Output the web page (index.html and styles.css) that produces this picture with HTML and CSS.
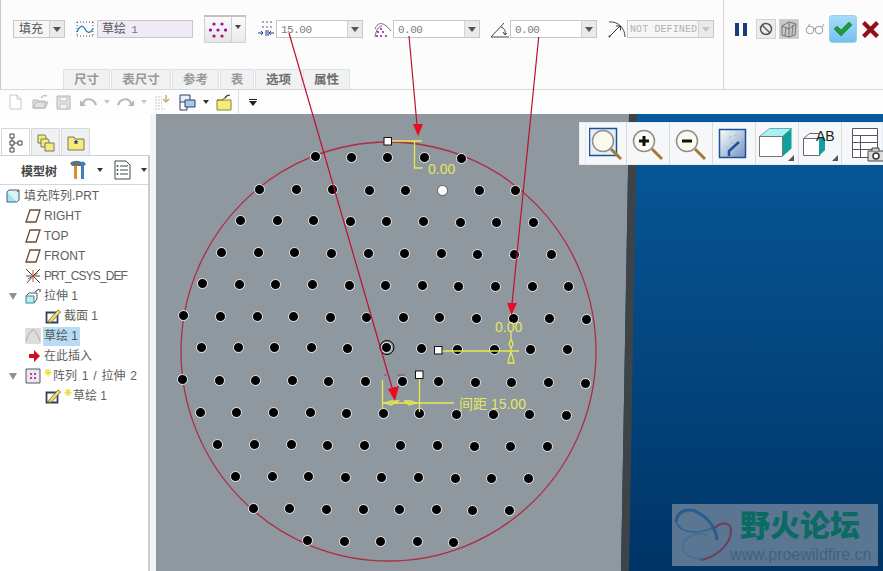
FILE: index.html
```html
<!DOCTYPE html>
<html lang="zh">
<head>
<meta charset="utf-8">
<title>填充阵列</title>
<link rel="stylesheet" href="styles.css">
</head>
<body>
<div class="app">
  <header class="ribbon">
    <div class="ribbon-main">
      <div class="controls">
        <div class="combo combo-type"><span class="combo-text cjk">填充</span><span class="combo-arrow"></span></div>
        <div class="group group-sketch">
          <svg class="ctl-icon" viewBox="0 0 18 18"><path d="M1 2h16M1 16h16M1 2v14M17 2v14" stroke="#445" stroke-width="1" stroke-dasharray="1 2" fill="none"/><path d="M1 12C4 5 7 5 9 9s5 5 8 0" stroke="#2a78b0" stroke-width="1.3" fill="none"/></svg>
          <div class="field field-sketch">草绘 <span class="field-num">1</span></div>
        </div>
        <div class="pattern-btn">
          <span class="pattern-face"><svg viewBox="0 0 18 18" width="18" height="18"><g fill="#a01090"><circle cx="5" cy="3" r="1.6"/><circle cx="13" cy="3" r="1.6"/><circle cx="1.500" cy="9" r="1.6"/><circle cx="9" cy="9" r="1.6"/><circle cx="16.500" cy="9" r="1.6"/><circle cx="5" cy="15" r="1.6"/><circle cx="13" cy="15" r="1.6"/></g></svg></span>
          <span class="pattern-arrow"></span>
        </div>
        <div class="group">
          <svg class="ctl-icon" viewBox="0 0 18 18"><g fill="#445"><circle cx="6" cy="2" r=".8"/><circle cx="10" cy="2" r=".8"/><circle cx="14" cy="2" r=".8"/><circle cx="6" cy="7" r=".8"/><circle cx="10" cy="7" r=".8"/><circle cx="14" cy="7" r=".8"/></g><path d="M1 13h5M4 11l2 2-2 2M9 10v6M11 10v6M17 13h-5M14 11l-2 2 2 2" stroke="#1a3f8f" fill="none"/></svg>
          <div class="number"><span class="number-val">15.00</span><span class="combo-arrow"></span></div>
        </div>
        <div class="group">
          <svg class="ctl-icon" viewBox="0 0 18 18"><path d="M1 9C4 1 10 2 17 11M1 17C2 10 5 6 8 6" stroke="#666" fill="none"/><g fill="#a01090"><circle cx="7" cy="9" r="1"/><circle cx="4" cy="12" r="1"/><circle cx="9" cy="12" r="1"/><circle cx="3" cy="16" r="1"/><circle cx="7" cy="16" r="1"/><circle cx="12" cy="16" r="1"/></g></svg>
          <div class="number"><span class="number-val">0.00</span><span class="combo-arrow"></span></div>
        </div>
        <div class="group">
          <svg class="ctl-icon" viewBox="0 0 18 18"><path d="M0 17L13 3M0 17h18" stroke="#444" fill="none"/><path d="M10 7c3 1 5 4 4 7M12 12l2 3 2-2" stroke="#444" fill="none"/></svg>
          <div class="number"><span class="number-val">0.00</span><span class="combo-arrow"></span></div>
        </div>
        <div class="group">
          <svg class="ctl-icon" viewBox="0 0 18 18"><path d="M1 2c9-1 16 6 16 15" stroke="#444" fill="none"/><path d="M1 17L12 6M8 6h4.500v4.500" stroke="#333" fill="none"/><circle cx="1.500" cy="16.500" r="1" fill="#333"/></svg>
          <div class="number number-off"><span class="number-val">NOT DEFINED</span><span class="combo-arrow"></span></div>
        </div>
      </div>
      <nav class="tabs">
        <span class="tab tab-a">尺寸</span>
        <span class="tab tab-b">表尺寸</span>
        <span class="tab tab-a">参考</span>
        <span class="tab tab-c">表</span>
        <span class="tab tab-a tab-on">选项</span>
        <span class="tab tab-a tab-on">属性</span>
      </nav>
    </div>
    <div class="actions">
      <svg class="act-pause" viewBox="0 0 12 13"><path d="M0 0h4v13H0zM8 0h4v13H8z" fill="#1a3a80"/></svg>
      <span class="act-box act-stop"><svg viewBox="0 0 20 18" width="20" height="18"><circle cx="10" cy="9" r="5.500" fill="none" stroke="#555" stroke-width="1.500"/><path d="M6 5l8 8" stroke="#555" stroke-width="1.500"/></svg></span>
      <span class="act-box act-hatch"><svg viewBox="0 0 20 18" width="20" height="18"><path d="M3 6l7-4 7 2-1 11-6 2-7-2zM10 2l0 15M7 7l-1 9M14 5l-1 10M3 6l7 3 7-5" stroke="#777" fill="none"/></svg></span>
      <svg class="act-glasses" viewBox="0 0 20 12"><circle cx="5" cy="7" r="3.800" fill="none" stroke="#999"/><circle cx="14" cy="7" r="3.800" fill="none" stroke="#999"/><path d="M8.500 6l2-1M17 4l2-3M3 3l2-2" stroke="#999" fill="none"/></svg>
      <span class="act-ok"><svg viewBox="0 0 20 16" width="20" height="16"><path d="M1 8l3-3 4 4 8-8 3 3-11 11z" fill="#1e9a3a" stroke="#0c6a22" stroke-width=".5"/></svg></span>
      <svg class="act-cancel" viewBox="0 0 17 17"><path d="M0 3l3-3 5.500 5.500L14 0l3 3-5.500 5.500L17 14l-3 3-5.500-5.500L3 17l-3-3 5.500-5.500z" fill="#8f1018"/></svg>
    </div>
  </header>

  <div class="toolbar">
    <svg class="tb-i tb-new" viewBox="0 0 13 16"><path d="M1 1h7l4 4v10H1zM8 1v4h4" fill="#fff" stroke="#c4c8cc"/></svg>
    <svg class="tb-i tb-open" viewBox="0 0 17 16"><path d="M1 14V6h5l1 1h6v7zM1 14l3-6h12l-3 6z" fill="#dfe1e3" stroke="#b4b8bc"/><path d="M9 4c2-3 4-3 6-2" stroke="#c0c4c8" fill="none" stroke-width="1.500"/></svg>
    <svg class="tb-i tb-save" viewBox="0 0 15 15"><path d="M1 1h13v13H1z" fill="#dfe2e5" stroke="#b0b4b8"/><path d="M4 2h7v4H4zM4 9h7v5H4z" fill="#f2f3f4" stroke="#c0c4c8"/></svg>
    <svg class="tb-i tb-undo" viewBox="0 0 17 12"><path d="M3 8c1-6 10-7 13 1" fill="none" stroke="#b6b9bc" stroke-width="2.200"/><path d="M0 4l6 6H0z" fill="#b6b9bc"/></svg>
    <span class="tb-dd tb-dd-pale tb-dd1"></span>
    <svg class="tb-i tb-redo" viewBox="0 0 17 12"><path d="M14 8C13 2 4 1 1 9" fill="none" stroke="#b6b9bc" stroke-width="2.200"/><path d="M17 4l-6 6h6z" fill="#b6b9bc"/></svg>
    <span class="tb-dd tb-dd-pale tb-dd2"></span>
    <svg class="tb-i tb-regen" viewBox="0 0 16 17"><path d="M1 3h7M1 6h7M1 9h7M1 12h7M1 15h10" stroke="#c4c8cc" stroke-dasharray="2 1" fill="none"/><path d="M12 1v7M9 5l3 3 3-3" stroke="#c8b070" fill="none" stroke-width="1.500"/></svg>
    <svg class="tb-i tb-win" viewBox="0 0 17 17"><path d="M1 1h10v7H1z" fill="#e8f0f8" stroke="#2a3f6a"/><path d="M6 6h10v7H6z" fill="#a8c8ea" stroke="#2a3f6a"/><path d="M1 8v8h7v-3" fill="none" stroke="#2a3f6a"/></svg>
    <span class="tb-dd tb-dd3"></span>
    <svg class="tb-i tb-folder" viewBox="0 0 16 17"><path d="M1 6h14v10H1z" fill="#f6ec7a" stroke="#8a8030"/><path d="M1 6h6l1-2h2" fill="none" stroke="#8a8030"/><path d="M9 4c1-2 3-3 5-3" fill="none" stroke="#333" stroke-width="1.200"/></svg>
    <span class="tb-sep"></span>
    <span class="tb-more"></span>
  </div>

  <main class="workspace">
    <aside class="side">
      <div class="side-tabs">
        <span class="side-tab side-tab-on"><svg viewBox="0 0 14 20" width="14" height="20"><path d="M1 1h4v4H1zM1 8h4v4H1zM1 15h4v4H1zM9 8h4v4H9zM3 5v3M3 12v3M5 10h4" fill="none" stroke="#444"/></svg></span>
        <span class="side-tab"><svg viewBox="0 0 18 18" width="18" height="18"><path d="M1 1h7l1 2v6H1z" fill="#f6ec7a" stroke="#776"/><path d="M4 5h7l1 2v6H4z" fill="#f6ec7a" stroke="#776"/><path d="M8 9h9v8H8z" fill="#f6ec7a" stroke="#776"/></svg></span>
        <span class="side-tab"><svg viewBox="0 0 18 16" width="18" height="16"><path d="M1 2h6l1 2h9v11H1z" fill="#f6ec7a" stroke="#776"/><text x="9" y="13" class="star-mark">*</text></svg></span>
      </div>
      <div class="side-panel">
        <div class="tree-head">
          <span class="tree-title">模型树</span>
          <svg class="head-tools" viewBox="0 0 18 20"><path d="M1 3c4-3 9-3 13 0l-2 3H3z" fill="#5f6f7f"/><path d="M5 6h3v13H5z" fill="#d8902c"/><path d="M12 4l2-3 3 3-2 2v13h-3z" fill="#3f7fc0"/></svg>
          <span class="tb-dd head-dd1"></span>
          <svg class="head-list" viewBox="0 0 17 20"><path d="M1 1h11l4 4v14H1z" fill="#fff" stroke="#444"/><path d="M6 6h8M6 10h8M6 14h8" stroke="#444"/><circle cx="3.500" cy="6" r="1" fill="#264"/><circle cx="3.500" cy="10" r="1" fill="#264"/><circle cx="3.500" cy="14" r="1" fill="#264"/></svg>
          <span class="tb-dd head-dd2"></span>
        </div>
        <ul class="tree">
          <li class="row lv0"><svg class="node" viewBox="0 0 14 14"><path d="M1 3h10v10H1z" fill="#9ee6ee" stroke="#557"/><path d="M1 3l2-2h10v10l-2 2M11 3l2-2" fill="#d4f4f8" stroke="#557"/></svg>填充阵列.PRT</li>
          <li class="row lv1"><svg class="node" viewBox="0 0 16 14"><path d="M1 13L5 1h10l-4 12z" fill="none" stroke="#6a4a30" stroke-width="1.300"/></svg>RIGHT</li>
          <li class="row lv1"><svg class="node" viewBox="0 0 16 14"><path d="M1 13L5 1h10l-4 12z" fill="none" stroke="#6a4a30" stroke-width="1.300"/></svg>TOP</li>
          <li class="row lv1"><svg class="node" viewBox="0 0 16 14"><path d="M1 13L5 1h10l-4 12z" fill="none" stroke="#6a4a30" stroke-width="1.300"/></svg>FRONT</li>
          <li class="row lv1"><svg class="node" viewBox="0 0 16 16"><path d="M8 8L1 1M8 8l7-7M8 8L2 15M8 8l7 7M1 8h14" stroke="#444" fill="none"/><path d="M8 2v12M3 11l10-6" stroke="#b85030" fill="none"/></svg><span class="narrow">PRT_CSYS_DEF</span></li>
          <li class="row lv1 has-arrow"><span class="twist"></span><svg class="node" viewBox="0 0 16 16"><path d="M1 8l3-3h8v6l-3 4" fill="none" stroke="#556"/><path d="M1 8h8v7H1z" fill="#bfeef2" stroke="#2a8a90"/><path d="M10 4l4-3M15 1v3" stroke="#334" fill="none"/></svg>拉伸 1</li>
          <li class="row lv2"><svg class="node" viewBox="0 0 16 16"><path d="M1.500 4.500h11v10h-11z" fill="#fff" stroke="#2f4258" stroke-width="1.800"/><path d="M4 12l9-10 2.500 2-9 10-3 .5z" fill="#f4dc70" stroke="#5a4a20" stroke-width=".7"/></svg>截面 1</li>
          <li class="row lv1"><svg class="node node-sk" viewBox="0 0 16 16"><path d="M0 0h16v16H0z" fill="#dcdcdc"/><path d="M1 13C4 4 7 2 8 2s4 2 7 11" fill="none" stroke="#aaa"/></svg><span class="hl">草绘 1</span></li>
          <li class="row lv1"><svg class="node" viewBox="0 0 16 14"><path d="M4 5h5V1l6 6-6 6V9H4z" fill="#d01020"/></svg>在此插入</li>
          <li class="row lv1 has-arrow"><span class="twist"></span><svg class="node" viewBox="0 0 16 16"><path d="M1 1h14v14H1z" fill="#ece6f2" stroke="#556"/><g fill="#a01060"><circle cx="6" cy="6" r="1"/><circle cx="10" cy="6" r="1"/><circle cx="6" cy="10" r="1"/><circle cx="10" cy="10" r="1"/></g></svg><span class="spark">✳</span><span class="wide">阵列 1 / 拉伸 2</span></li>
          <li class="row lv2"><svg class="node" viewBox="0 0 16 16"><path d="M1.500 4.500h11v10h-11z" fill="#fff" stroke="#2f4258" stroke-width="1.800"/><path d="M4 12l9-10 2.500 2-9 10-3 .5z" fill="#f4dc70" stroke="#5a4a20" stroke-width=".7"/></svg><span class="spark">✳</span>草绘 1</li>
        </ul>
      </div>
    </aside>

    <section class="canvas">
      <svg class="scene" viewBox="156 114 727 457">
        <defs>
          <linearGradient id="deep" x1="0" y1="0" x2="0" y2="1"><stop offset="0" stop-color="#075a9c"/><stop offset="1" stop-color="#003466"/></linearGradient>
        </defs>
        <path class="sky" d="M629 114H883V571H621z"/>
        <path class="edge" d="M629 114h8l-8 457h-8z"/>
        <ellipse class="outline" cx="388.500" cy="351.500" rx="207.500" ry="209.500"/>
        <g class="dots">
          <circle cx="315" cy="156"/><circle cx="351" cy="157"/><circle cx="387" cy="157"/><circle cx="424" cy="157"/><circle cx="461" cy="158"/>
          <circle cx="259" cy="189"/><circle cx="296" cy="189"/><circle cx="332" cy="189"/><circle cx="369" cy="190"/><circle cx="405" cy="190"/><circle class="dot-white" cx="442" cy="190"/><circle cx="479" cy="190"/><circle cx="515" cy="190"/>
          <circle cx="240" cy="220"/><circle cx="277" cy="220"/><circle cx="313" cy="220"/><circle cx="350" cy="221"/><circle cx="386" cy="221"/><circle cx="423" cy="221"/><circle cx="460" cy="222"/><circle cx="496" cy="222"/><circle cx="533" cy="222"/>
          <circle cx="221" cy="252"/><circle cx="258" cy="252"/><circle cx="294" cy="252"/><circle cx="331" cy="253"/><circle cx="368" cy="253"/><circle cx="404" cy="253"/><circle cx="441" cy="253"/><circle cx="477" cy="254"/><circle cx="514" cy="254"/><circle cx="551" cy="254"/>
          <circle cx="202" cy="283"/><circle cx="239" cy="284"/><circle cx="275" cy="284"/><circle cx="312" cy="284"/><circle cx="349" cy="285"/><circle cx="385" cy="285"/><circle cx="422" cy="285"/><circle cx="458" cy="286"/><circle cx="495" cy="286"/><circle cx="532" cy="286"/><circle cx="568" cy="286"/>
          <circle cx="183" cy="315"/><circle cx="220" cy="316"/><circle cx="257" cy="316"/><circle cx="293" cy="316"/><circle cx="330" cy="317"/><circle cx="366" cy="317"/><circle cx="403" cy="317"/><circle cx="439" cy="317"/><circle cx="476" cy="318"/><circle cx="513" cy="318"/><circle cx="549" cy="318"/><circle cx="586" cy="319"/>
          <circle cx="201" cy="347"/><circle cx="238" cy="347"/><circle cx="274" cy="347"/><circle cx="311" cy="347"/><circle cx="347" cy="348"/><circle cx="386" cy="347"/><circle cx="421" cy="348"/><circle cx="457" cy="349"/><circle cx="494" cy="349"/><circle cx="530" cy="349"/><circle cx="567" cy="349"/>
          <circle cx="182" cy="379"/><circle cx="219" cy="380"/><circle cx="255" cy="380"/><circle cx="292" cy="380"/><circle cx="328" cy="381"/><circle cx="365" cy="381"/><circle cx="402" cy="381"/><circle cx="438" cy="381"/><circle cx="475" cy="382"/><circle cx="511" cy="382"/><circle cx="548" cy="382"/><circle cx="585" cy="383"/>
          <circle cx="200" cy="412"/><circle cx="236" cy="412"/><circle cx="273" cy="412"/><circle cx="310" cy="412"/><circle cx="346" cy="413"/><circle cx="383" cy="413"/><circle cx="419" cy="413"/><circle cx="456" cy="414"/><circle cx="493" cy="414"/><circle cx="529" cy="414"/><circle cx="566" cy="415"/>
          <circle cx="217" cy="444"/><circle cx="254" cy="444"/><circle cx="291" cy="444"/><circle cx="327" cy="445"/><circle cx="364" cy="445"/><circle cx="400" cy="445"/><circle cx="437" cy="445"/><circle cx="474" cy="446"/><circle cx="510" cy="446"/><circle cx="547" cy="446"/>
          <circle cx="235" cy="476"/><circle cx="272" cy="476"/><circle cx="308" cy="476"/><circle cx="345" cy="477"/><circle cx="381" cy="477"/><circle cx="418" cy="477"/><circle cx="455" cy="478"/><circle cx="491" cy="478"/><circle cx="528" cy="478"/>
          <circle cx="253" cy="508"/><circle cx="289" cy="508"/><circle cx="326" cy="509"/><circle cx="363" cy="509"/><circle cx="399" cy="509"/><circle cx="436" cy="509"/><circle cx="472" cy="510"/><circle cx="509" cy="510"/>
          <circle cx="307" cy="540"/><circle cx="344" cy="541"/><circle cx="380" cy="541"/><circle cx="417" cy="541"/><circle cx="453" cy="542"/>
        </g>
        <circle class="ring" cx="387" cy="347.500" r="7"/>
        <path class="tick" d="M384 375h3M397 375h8"/>
        <g class="dim">
          <path d="M388 141h34M414.500 141v27h8"/>
          <path d="M438 351h81M511 332v6"/>
          <path d="M511 339l2 5-2 5-2-5zM511 352l2 6 1 5h-6l1-5z"/>
          <path d="M382.500 380v29M419.500 379v33M382 403h72"/>
          <path d="M385 403l6-2h7l-7 4zM416 403l-5-2h-6l4 4z"/>
        </g>
        <rect class="handle" x="384" y="137.500" width="7.500" height="7.500"/>
        <rect class="handle" x="434.500" y="346.500" width="7.500" height="7.500"/>
        <rect class="handle" x="415.500" y="371" width="7.500" height="7.500"/>
        <text class="dim-text" x="428" y="174">0.00</text>
        <text class="dim-text" x="495" y="332">0.00</text>
        <text class="dim-text" x="459" y="409">间距 15.00</text>
      </svg>

      <div class="view-tools">
        <span class="view-btn view-first"><svg viewBox="590 125 34 36" width="34" height="36"><path d="M590.500 127.500h27v27h-27z" fill="#e8eef6" stroke="#1f4f98" stroke-width="1.500"/><circle cx="604" cy="140" r="10.500" fill="#fbf9ee" stroke="#8a8f90" stroke-width="1.500"/><path d="M612 148l10 10" stroke="#a87838" stroke-width="3"/></svg></span>
        <span class="view-btn"><svg viewBox="632 125 34 36" width="34" height="36"><circle cx="645" cy="140" r="10.500" fill="#fbf9ee" stroke="#8a8f90" stroke-width="1.500"/><path d="M640 140h10M645 135v10" stroke="#111" stroke-width="3"/><path d="M653 148l10 10" stroke="#a87838" stroke-width="3"/></svg></span>
        <span class="view-btn"><svg viewBox="675 125 34 36" width="34" height="36"><circle cx="688" cy="140" r="10.500" fill="#fbf9ee" stroke="#8a8f90" stroke-width="1.500"/><path d="M683 140h10" stroke="#111" stroke-width="3"/><path d="M696 148l10 10" stroke="#a87838" stroke-width="3"/></svg></span>
        <span class="view-btn"><svg viewBox="719 125 34 36" width="34" height="36"><defs><linearGradient id="fadeb" x1="0" y1="0" x2="1" y2="1"><stop offset="0" stop-color="#fff"/><stop offset="1" stop-color="#6f93bd"/></linearGradient></defs><path d="M721.500 128.500h26v28h-26z" fill="url(#fadeb)" stroke="#1f4f98" stroke-width="1.500"/><path d="M731 155v-5l10-9" stroke="#1f4f98" stroke-width="2.500" fill="none"/><path d="M733 143l2-2M737 135l2-2M731 137l2-2M728 147l1-1" stroke="#9cb4d0"/></svg></span>
        <span class="view-btn view-corner"><svg viewBox="761 125 38 37" width="38" height="37"><path d="M762.500 136.500l10-8h22l-9 8z" fill="#a8f0f4" stroke="#66aab0"/><path d="M785.500 136.500l9-8v20l-9 8z" fill="#10a09c"/><path d="M762.500 136.500h23v20h-23z" fill="#fff" stroke="#777"/><path d="M797 155v6h-6z" fill="#555"/></svg></span>
        <span class="view-btn view-corner"><svg viewBox="804 125 38 37" width="38" height="37"><path d="M806.500 138.500l6-5h10" fill="none" stroke="#667"/><path d="M806.500 138.500h16v17h-16z" fill="#fff" stroke="#667"/><path d="M822 138h6v12l-6 6z" fill="#10a09c"/><text x="819" y="141" class="ab">AB</text><path d="M841 155v6h-6z" fill="#555"/></svg></span>
        <span class="view-btn"><svg viewBox="848 125 35 36" width="35" height="36"><path d="M850.500 127.500h25v29h-25zM850.500 134.500h25M850.500 141.500h25M850.500 148.500h25M858.500 134.500v22" fill="#fff" stroke="#556"/><path d="M866 150h17v10h-17z" fill="#ddd" stroke="#444"/><path d="M870 150v-3h7v3" fill="#ccc" stroke="#444"/><circle cx="874" cy="155" r="3" fill="#fff" stroke="#333" stroke-width="1.500"/></svg></span>
      </div>

      <div class="watermark">
        <svg class="wm-logo" viewBox="672 504 70 62"><path d="M676 522C677 510 690 507 699 513 708 518 716 528 717 540" fill="none" stroke="#2b5c8c" stroke-width="3"/><path d="M676 522C680 532 695 536 715 527" fill="none" stroke="#2b5c8c" stroke-width="1.200"/><path d="M715 528C722 521 731 522 731 531 731 545 715 558 700 560" fill="none" stroke="#703f60" stroke-width="2.200"/><path d="M707 535C695 532 684 537 683 546 683 555 693 561 703 558" fill="none" stroke="#3f6f96" stroke-width="1.500"/></svg>
        <span class="wm-title">野火论坛</span>
        <span class="wm-url">www.proewildfire.cn</span>
      </div>
    </section>
  </main>

  <svg class="leaders" viewBox="0 0 883 571">
    <g class="leader">
      <path d="M289 33L393 391"/>
      <path d="M409 36L417 125"/>
      <path d="M538.700 37L512 304"/>
    </g>
    <g class="leader-head">
      <path d="M388 389l11-3-4 15z"/>
      <path d="M413 124h10l-5 12z"/>
      <path d="M507 303h10l-5.500 12z"/>
    </g>
  </svg>
</div>
</body>
</html>
```

FILE: styles.css
```css
* { box-sizing: border-box; }
html, body { margin: 0; padding: 0; }
body {
  width: 883px;
  height: 571px;
  overflow: hidden;
  background: #fff;
  font-family: "Liberation Sans", "Noto Sans CJK SC", sans-serif;
  font-size: 12px;
  color: #555;
}
svg { display: block; flex: none; }
.app { position: relative; display: flex; flex-direction: column; width: 883px; height: 571px; }
.leaders { position: absolute; left: 0; top: 0; width: 883px; height: 571px; pointer-events: none; }

/* ribbon */
.ribbon {
  display: flex;
  height: 90px;
  flex: none;
  background: #fcfcfc;
  border-bottom: 1px solid #d6d6d6;
  box-shadow: inset 1px 0 0 #c8c8c8;
}
.ribbon-main {
  width: 724px;
  display: flex;
  flex-direction: column;
  border-right: 1px solid #d6d6d6;
}
.controls {
  display: flex;
  align-items: center;
  gap: 11px;
  height: 28px;
  margin-top: 15px;
  padding-left: 13px;
}
.group { display: flex; align-items: center; gap: 1px; }
.group-sketch { gap: 3px; }
.ctl-icon { width: 18px; height: 18px; }
.combo, .number, .field {
  height: 18px;
  display: flex;
  align-items: stretch;
  border: 1px solid #c6c8ca;
  background: #fff;
}
.combo-type { width: 52px; background: #f6f6f6; }
.combo-text { flex: 1; padding-left: 5px; line-height: 17px; color: #555; }
.combo-arrow {
  position: relative;
  width: 15px;
  flex: none;
  background: #e9eaec;
  border-left: 1px solid #cfd1d3;
}
.combo-arrow::after {
  content: "";
  position: absolute;
  left: 3px;
  top: 6px;
  border-left: 4px solid transparent;
  border-right: 4px solid transparent;
  border-top: 5px solid #555;
}
.field-sketch {
  width: 96px;
  padding-left: 4px;
  line-height: 17px;
  background: #efe9f8;
  color: #555;
  display: block;
}
.field-num { font-family: "Liberation Mono", monospace; font-size: 11px; color: #777; margin-left: 2px; }
.number { width: 87px; }
.number-val {
  flex: 1;
  padding-left: 4px;
  font-family: "Liberation Mono", monospace;
  font-size: 11px;
  line-height: 18px;
  color: #7c7c7c;
  letter-spacing: -.5px;
  white-space: nowrap;
  overflow: hidden;
}
.number-off { background: #f6f6f6; }
.number-off .number-val { color: #b0b0b0; font-size: 10px; letter-spacing: .1px; padding-left: 2px; }
.number-off .combo-arrow::after { border-top-color: #c4c4c4; }
.pattern-btn {
  display: flex;
  width: 42px;
  height: 28px;
  border-top: 2px solid #bfc1c3;
}
.pattern-face {
  width: 28px;
  display: flex;
  align-items: center;
  justify-content: center;
  background: linear-gradient(#fbfbfb, #e4e5e6);
  border: 1px solid #d0d2d4;
  border-top: 0;
}
.pattern-arrow {
  position: relative;
  flex: 1;
  background: linear-gradient(#fbfbfb, #e9eaeb);
  border-right: 1px solid #d0d2d4;
  border-bottom: 1px solid #d0d2d4;
}
.pattern-arrow::after {
  content: "";
  position: absolute;
  left: 3px;
  top: 8px;
  border-left: 3.500px solid transparent;
  border-right: 3.500px solid transparent;
  border-top: 4px solid #444;
}
.tabs { display: flex; margin-top: auto; margin-left: 63px; gap: 1px; height: 20px; }
.tab {
  display: flex;
  align-items: center;
  justify-content: center;
  height: 20px;
  padding-bottom: 2px;
  background: #f0f1f3;
  border: 1px solid #dfe1e3;
  border-bottom: 0;
  font-size: 12.500px;
  font-weight: 700;
  color: #999;
}
.tab-a { width: 47px; }
.tab-b { width: 60px; }
.tab-c { width: 34px; }
.tab-on { color: #6c6c6c; }

/* accept / cancel */
.actions { display: flex; align-items: center; height: 58px; flex: 1; }
.act-pause { width: 12px; height: 13px; margin-left: 11px; }
.act-box {
  width: 20px;
  height: 20px;
  display: flex;
  align-items: center;
  justify-content: center;
  border: 1px solid #d0d2d4;
}
.act-stop { margin-left: 9px; background: #ececee; }
.act-hatch { margin-left: 3px; background: #c6c8ca; }
.act-glasses { width: 20px; height: 12px; margin-left: 6px; }
.act-ok {
  width: 28px;
  height: 28px;
  margin-left: 4px;
  display: flex;
  align-items: center;
  justify-content: center;
  background: linear-gradient(#a6dcfa, #74c0f0);
  border: 1px solid #a0cfe8;
  border-radius: 3px;
}
.act-cancel { width: 17px; height: 17px; margin-left: 5px; }

/* quick access */
.toolbar { position: relative; display: flex; align-items: center; height: 24px; flex: none; background: #fdfdfd; }
.tb-i { flex: none; }
.tb-new { width: 13px; height: 16px; margin-left: 9px; }
.tb-open { width: 17px; height: 16px; margin-left: 10px; }
.tb-save { width: 15px; height: 15px; margin-left: 7px; }
.tb-undo { width: 17px; height: 12px; margin-left: 9px; }
.tb-dd {
  flex: none;
  width: 0;
  height: 0;
  border-left: 3.500px solid transparent;
  border-right: 3.500px solid transparent;
  border-top: 4px solid #333;
}
.tb-dd-pale { border-top-color: #c4c6c8; }
.tb-dd1 { margin-left: 7px; }
.tb-redo { width: 17px; height: 12px; margin-left: 7px; }
.tb-dd2 { margin-left: 7px; }
.tb-regen { width: 16px; height: 17px; margin-left: 7px; }
.tb-win { width: 17px; height: 17px; margin-left: 9px; }
.tb-dd3 { margin-left: 7px; }
.tb-folder { width: 16px; height: 17px; margin-left: 7px; }
.tb-sep { width: 1px; height: 24px; margin-left: 6px; background: #dcdcdc; }
.tb-more {
  width: 8px;
  height: 6px;
  margin-left: 10px;
  border-top: 1px solid #222;
  position: relative;
}
.tb-more::after {
  content: "";
  position: absolute;
  left: 0;
  top: 1px;
  border-left: 4px solid transparent;
  border-right: 4px solid transparent;
  border-top: 5px solid #222;
}

/* workspace */
.workspace { display: flex; flex: 1; min-height: 0; }
.side {
  width: 156px;
  flex: none;
  display: flex;
  flex-direction: column;
  padding-top: 14px;
  background: #fff;
  border-right: 6px solid #f2f4f5;
}
.side-tabs { display: flex; height: 28px; padding-left: 1px; gap: 1px; flex: none; }
.side-tab {
  width: 29px;
  display: flex;
  align-items: center;
  justify-content: center;
  background: #eff0f2;
  border: 1px solid #d6d8da;
  border-bottom: 0;
}
.side-tab-on { background: #fff; }
.star-mark { font: 700 11px "Liberation Sans", sans-serif; fill: #1a2f8f; text-anchor: middle; }
.side-panel {
  flex: 1;
  border-top: 1px solid #cdd1d5;
  border-right: 2px solid #c6ccd2;
  margin-top: -1px;
  position: relative;
}
.tree-head {
  display: flex;
  align-items: center;
  height: 29px;
  border-bottom: 1px solid #d4d6d8;
}
.tree-title { margin-left: 21px; font-weight: 700; color: #444; }
.head-tools { width: 18px; height: 20px; margin-left: 12px; }
.head-dd1 { margin-left: 10px; }
.head-list { width: 17px; height: 20px; margin-left: 11px; }
.head-dd2 { margin-left: 10px; }
.tree { list-style: none; margin: 0; padding: 1px 0 0; }
.row {
  display: flex;
  align-items: center;
  height: 20px;
  line-height: 20px;
  white-space: nowrap;
  color: #606060;
}
.node { width: 16px; height: 16px; margin-right: 3px; }
.narrow { letter-spacing: -.9px; }
.wide { word-spacing: 1.500px; }
.lv0 { padding-left: 6px; }
.lv0 .node { width: 14px; height: 14px; margin-right: 4px; }
.lv1 { padding-left: 25px; }
.lv2 { padding-left: 45px; }
.has-arrow { padding-left: 9px; }
.twist {
  width: 0;
  height: 0;
  margin-right: 8px;
  border-left: 4px solid transparent;
  border-right: 4px solid transparent;
  border-top: 7px solid #8a9096;
}
.node-sk { margin-right: 2px; }
.hl { background: #b8dcf4; color: #555; padding: 0 2px 0 1px; line-height: 19px; }
.spark { color: #e8e020; font-size: 10px; line-height: 10px; font-weight: 700; align-self: flex-start; margin-top: 2px; width: 9px; }

/* graphics window */
.canvas { position: relative; flex: 1; overflow: hidden; background: #8f979f; }
.scene { width: 727px; height: 457px; }
.sky { fill: url(#deep); }
.edge { fill: #3e4348; }
.outline { fill: none; stroke: #b02c44; stroke-width: 1.300; }
.dots { transform: translate(.5px, .5px); }
.dots circle { r: 5px; fill: #000; stroke: #fff; stroke-width: .9; }
.dots .dot-white { fill: #fff; stroke: #222; stroke-width: .6; }
.ring { fill: none; stroke: #000; stroke-width: 1; }
.tick { stroke: #7a5660; fill: none; }
.dim path { fill: none; stroke: #e6ea50; stroke-width: 1.300; }
.handle { fill: #fff; stroke: #111; stroke-width: 1; }
.dim-text {
  font: 14px "Liberation Sans", "Noto Sans CJK SC", sans-serif;
  fill: #e4e85c;
}
.leader path { fill: none; stroke: #c01030; stroke-width: 1.200; }
.leader-head path { fill: #ec0a20; }
.ab { font: 14px "Liberation Sans", sans-serif; fill: #222; }

.view-tools {
  position: absolute;
  left: 423px;
  top: 8px;
  display: flex;
  width: 304px;
  height: 43px;
  padding-left: 6px;
  background: #f6f7f9;
  box-shadow: inset 0 0 0 1px #e6ecf2;
}
.view-btn {
  width: 43px;
  flex: none;
  display: flex;
  align-items: center;
  justify-content: center;
  border-right: 1px solid #d8dcdf;
}
.view-first { width: 42px; border-left: 1px solid #e4e8ec; }
.view-btn:last-child { border-right: 0; justify-content: flex-end; }

.watermark {
  position: absolute;
  left: 516px;
  top: 390px;
  width: 206px;
  height: 62px;
  background: #5b7692;
}
.wm-logo { position: absolute; left: 0; top: 0; width: 70px; height: 62px; }
.wm-title {
  position: absolute;
  left: 68px;
  top: 2px;
  font-family: "Noto Sans CJK SC", sans-serif;
  font-size: 30px;
  line-height: 34px;
  font-weight: 900;
  letter-spacing: 0;
  color: #0b6a62;
  white-space: nowrap;
}
.wm-url {
  position: absolute;
  left: 58px;
  top: 41px;
  font-size: 16px;
  line-height: 20px;
  color: #42617f;
  white-space: nowrap;
}
```
